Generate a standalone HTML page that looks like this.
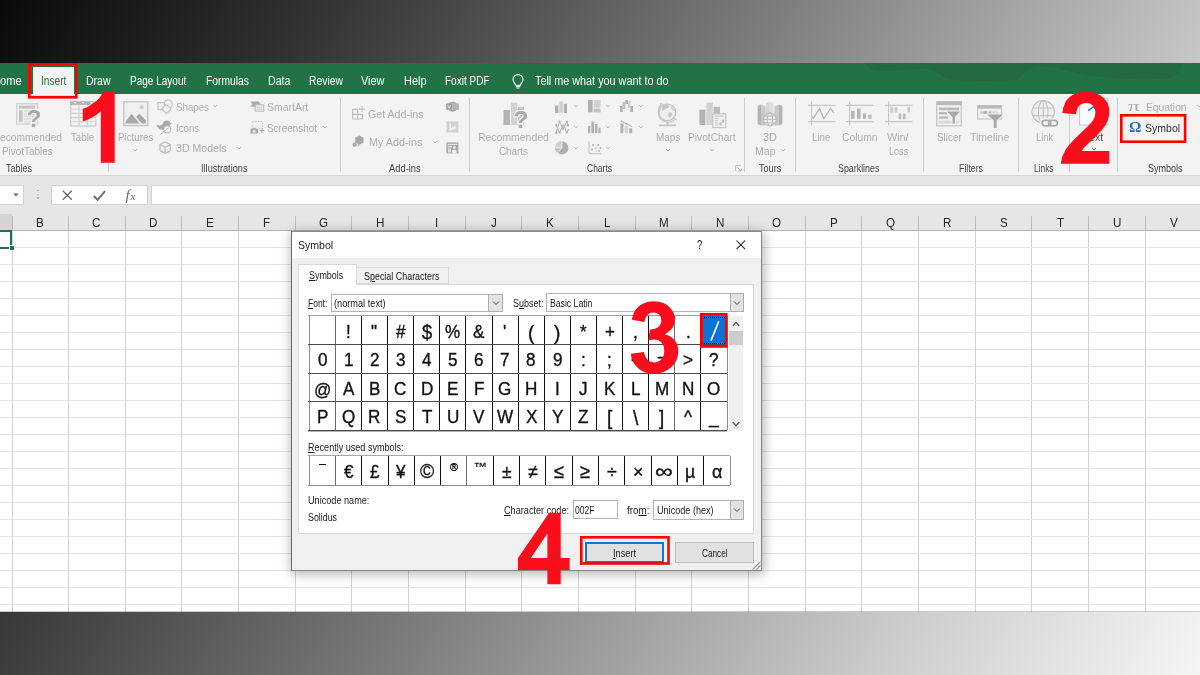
<!DOCTYPE html>
<html><head><meta charset="utf-8"><title>Symbol dialog</title>
<style>
html,body{margin:0;padding:0}
body{width:1200px;height:675px;overflow:hidden;position:relative;font-family:"Liberation Sans",sans-serif;background:#7f7f7f}
div,span.t,svg.i{position:absolute}
span.t{white-space:nowrap;line-height:1;transform-origin:0 0}
span.t u{text-decoration:underline;text-decoration-thickness:1px;text-underline-offset:1px}
svg.i{overflow:visible}
.num{font-weight:bold;color:#fb0d1b;font-size:100px;line-height:1;position:absolute;transform-origin:0 0}
</style></head><body><div id="bg" style="left:0;top:0;width:1200px;height:675px;background:linear-gradient(120deg,#0a0a0a 0%,#1d1d1d 10%,#323232 20%,#4b4b4b 30%,#656565 40%,#7f7f7f 50%,#9a9a9a 60%,#b4b4b4 70%,#cdcdcd 80%,#e2e2e2 90%,#f5f5f5 100%)"></div><div id="w" style="left:0;top:0;width:1200px;height:675px;overflow:hidden;will-change:transform">
<div style="left:0.00px;top:63.00px;width:1200.00px;height:549.00px;background:#ffffff;"></div>
<div style="left:0.00px;top:63.00px;width:1200.00px;height:31.00px;background:#217346;"></div>
<svg class="i" style="left:840.00px;top:63.00px;" width="360" height="31" viewBox="0 0 360 31"><path d="M25 0 C28 5 32 8 45 8 C60 8 75 5 88 6 C95 7 100 12 105 15 C120 19 150 18 178 17 C181 12 188 5 198 3.6 C215 3 225 8 240 11 C270 16 310 18 330 15 C338 12 342 5 342 0 Z" fill="#24693f" opacity=".85"/></svg>
<div style="left:0.00px;top:94.00px;width:1200.00px;height:81.00px;background:#f3f3f3;"></div>
<div style="left:0.00px;top:175.00px;width:1200.00px;height:1.00px;background:#d4d4d4;"></div>
<div style="left:0.00px;top:176.00px;width:1200.00px;height:38.00px;background:#e6e6e6;"></div>
<div style="left:33.30px;top:66.70px;width:41.00px;height:27.50px;background:#f3f3f3;"></div>
<span class="t" style="left:0.00px;top:75px;font-size:12px;color:#ffffff;transform:scaleX(0.9295);">ome</span>
<span class="t" style="left:86.30px;top:75px;font-size:12px;color:#ffffff;transform:scaleX(0.8749);">Draw</span>
<span class="t" style="left:130.00px;top:75px;font-size:12px;color:#ffffff;transform:scaleX(0.8354);">Page Layout</span>
<span class="t" style="left:205.50px;top:75px;font-size:12px;color:#ffffff;transform:scaleX(0.8598);">Formulas</span>
<span class="t" style="left:267.50px;top:75px;font-size:12px;color:#ffffff;transform:scaleX(0.8876);">Data</span>
<span class="t" style="left:309.00px;top:75px;font-size:12px;color:#ffffff;transform:scaleX(0.8641);">Review</span>
<span class="t" style="left:361.00px;top:75px;font-size:12px;color:#ffffff;transform:scaleX(0.9111);">View</span>
<span class="t" style="left:403.50px;top:75px;font-size:12px;color:#ffffff;transform:scaleX(0.9116);">Help</span>
<span class="t" style="left:445.00px;top:75px;font-size:12px;color:#ffffff;transform:scaleX(0.8343);">Foxit PDF</span>
<span class="t" style="left:535.00px;top:75px;font-size:12px;color:#ffffff;transform:scaleX(0.9015);">Tell me what you want to do</span>
<span class="t" style="left:41.30px;top:75px;font-size:12px;color:#217346;transform:scaleX(0.8463);">Insert</span>
<svg class="i" style="left:511.00px;top:73.00px;" width="14" height="16" viewBox="0 0 14 16"><path d="M7 1.6 C3.9 1.6 2 3.9 2 6.4 C2 8.3 3.2 9.4 4 10.6 C4.4 11.2 4.5 11.7 4.5 12.3 L9.5 12.3 C9.5 11.7 9.6 11.2 10 10.6 C10.8 9.4 12 8.3 12 6.4 C12 3.9 10.1 1.6 7 1.6 Z" fill="none" stroke="#fff" stroke-width="1.1"/>
<path d="M4.8 13.6 H9.2 M5.4 15 H8.6" stroke="#fff" stroke-width="1"/></svg>
<div style="left:107.90px;top:98.00px;width:1.00px;height:73.50px;background:#cdcdcd;"></div>
<div style="left:339.90px;top:98.00px;width:1.00px;height:73.50px;background:#cdcdcd;"></div>
<div style="left:468.80px;top:98.00px;width:1.00px;height:73.50px;background:#cdcdcd;"></div>
<div style="left:743.90px;top:98.00px;width:1.00px;height:73.50px;background:#cdcdcd;"></div>
<div style="left:795.10px;top:98.00px;width:1.00px;height:73.50px;background:#cdcdcd;"></div>
<div style="left:922.80px;top:98.00px;width:1.00px;height:73.50px;background:#cdcdcd;"></div>
<div style="left:1017.90px;top:98.00px;width:1.00px;height:73.50px;background:#cdcdcd;"></div>
<div style="left:1068.80px;top:98.00px;width:1.00px;height:73.50px;background:#cdcdcd;"></div>
<div style="left:1116.80px;top:98.00px;width:1.00px;height:73.50px;background:#cdcdcd;"></div>
<span class="t" style="left:6.00px;top:163px;font-size:10.6px;color:#444444;transform:scaleX(0.8485);">Tables</span>
<span class="t" style="left:200.70px;top:163px;font-size:10.6px;color:#444444;transform:scaleX(0.8692);">Illustrations</span>
<span class="t" style="left:388.70px;top:163px;font-size:10.6px;color:#444444;transform:scaleX(0.8820);">Add-ins</span>
<span class="t" style="left:587.00px;top:163px;font-size:10.6px;color:#444444;transform:scaleX(0.8007);">Charts</span>
<span class="t" style="left:759.00px;top:163px;font-size:10.6px;color:#444444;transform:scaleX(0.8564);">Tours</span>
<span class="t" style="left:838.00px;top:163px;font-size:10.6px;color:#444444;transform:scaleX(0.8365);">Sparklines</span>
<span class="t" style="left:958.50px;top:163px;font-size:10.6px;color:#444444;transform:scaleX(0.8317);">Filters</span>
<span class="t" style="left:1033.70px;top:163px;font-size:10.6px;color:#444444;transform:scaleX(0.7880);">Links</span>
<span class="t" style="left:1147.60px;top:163px;font-size:10.6px;color:#444444;transform:scaleX(0.8512);">Symbols</span>
<span class="t" style="left:0.00px;top:131px;font-size:11.6px;color:#adadad;transform:scaleX(0.8821);">ecommended</span>
<span class="t" style="left:2.20px;top:145px;font-size:11.6px;color:#adadad;transform:scaleX(0.8564);">PivotTables</span>
<span class="t" style="left:71.30px;top:131px;font-size:11.6px;color:#adadad;transform:scaleX(0.8366);">Table</span>
<span class="t" style="left:117.70px;top:131px;font-size:11.6px;color:#adadad;transform:scaleX(0.8424);">Pictures</span>
<span class="t" style="left:175.60px;top:101px;font-size:11.6px;color:#adadad;transform:scaleX(0.8388);">Shapes</span>
<span class="t" style="left:175.80px;top:122px;font-size:11.6px;color:#adadad;transform:scaleX(0.8368);">Icons</span>
<span class="t" style="left:175.60px;top:142px;font-size:11.6px;color:#adadad;transform:scaleX(0.9126);">3D Models</span>
<span class="t" style="left:267.00px;top:101px;font-size:11.6px;color:#adadad;transform:scaleX(0.9025);">SmartArt</span>
<span class="t" style="left:267.00px;top:122px;font-size:11.6px;color:#adadad;transform:scaleX(0.8521);">Screenshot</span>
<span class="t" style="left:368.40px;top:108px;font-size:11.6px;color:#adadad;transform:scaleX(0.9173);">Get Add-ins</span>
<span class="t" style="left:368.60px;top:136px;font-size:11.6px;color:#adadad;transform:scaleX(0.9307);">My Add-ins</span>
<span class="t" style="left:478.40px;top:131px;font-size:11.6px;color:#adadad;transform:scaleX(0.9013);">Recommended</span>
<span class="t" style="left:499.40px;top:145px;font-size:11.6px;color:#adadad;transform:scaleX(0.8429);">Charts</span>
<span class="t" style="left:655.70px;top:131px;font-size:11.6px;color:#adadad;transform:scaleX(0.8566);">Maps</span>
<span class="t" style="left:688.00px;top:131px;font-size:11.6px;color:#adadad;transform:scaleX(0.8789);">PivotChart</span>
<span class="t" style="left:763.40px;top:131px;font-size:11.6px;color:#adadad;transform:scaleX(0.9306);">3D</span>
<span class="t" style="left:755.40px;top:145px;font-size:11.6px;color:#adadad;transform:scaleX(0.9129);">Map</span>
<span class="t" style="left:812.20px;top:131px;font-size:11.6px;color:#adadad;transform:scaleX(0.8390);">Line</span>
<span class="t" style="left:841.70px;top:131px;font-size:11.6px;color:#adadad;transform:scaleX(0.8906);">Column</span>
<span class="t" style="left:887.20px;top:131px;font-size:11.6px;color:#adadad;transform:scaleX(0.9310);">Win/</span>
<span class="t" style="left:888.80px;top:145px;font-size:11.6px;color:#adadad;transform:scaleX(0.7836);">Loss</span>
<span class="t" style="left:936.80px;top:131px;font-size:11.6px;color:#adadad;transform:scaleX(0.8550);">Slicer</span>
<span class="t" style="left:969.70px;top:131px;font-size:11.6px;color:#adadad;transform:scaleX(0.9054);">Timeline</span>
<span class="t" style="left:1035.80px;top:131px;font-size:11.6px;color:#adadad;transform:scaleX(0.8082);">Link</span>
<span class="t" style="left:1145.60px;top:101px;font-size:11.6px;color:#adadad;transform:scaleX(0.8865);">Equation</span>
<span class="t" style="left:1083.50px;top:131px;font-size:11.6px;color:#444;transform:scaleX(0.8978);">Text</span>
<span class="t" style="left:1144.80px;top:122px;font-size:11.6px;color:#333;transform:scaleX(0.9100);">Symbol</span>
<svg class="i" style="left:131.30px;top:147.00px;" width="8" height="6" viewBox="0 0 8 6"><path d="M2.1 2.05 L4 3.95 L5.9 2.05" fill="none" stroke="#b8b8b8" stroke-width="1.0"/></svg>
<svg class="i" style="left:211.00px;top:102.80px;" width="8" height="6" viewBox="0 0 8 6"><path d="M2.1 2.05 L4 3.95 L5.9 2.05" fill="none" stroke="#b8b8b8" stroke-width="1.0"/></svg>
<svg class="i" style="left:235.00px;top:144.80px;" width="8" height="6" viewBox="0 0 8 6"><path d="M2.1 2.05 L4 3.95 L5.9 2.05" fill="none" stroke="#b8b8b8" stroke-width="1.0"/></svg>
<svg class="i" style="left:320.50px;top:123.50px;" width="8" height="6" viewBox="0 0 8 6"><path d="M2.1 2.05 L4 3.95 L5.9 2.05" fill="none" stroke="#b8b8b8" stroke-width="1.0"/></svg>
<svg class="i" style="left:430.60px;top:138.60px;" width="8" height="6" viewBox="0 0 8 6"><path d="M2.1 2.05 L4 3.95 L5.9 2.05" fill="none" stroke="#b8b8b8" stroke-width="1.0"/></svg>
<svg class="i" style="left:571.70px;top:103.40px;" width="8" height="6" viewBox="0 0 8 6"><path d="M2.1 2.05 L4 3.95 L5.9 2.05" fill="none" stroke="#b8b8b8" stroke-width="1.0"/></svg>
<svg class="i" style="left:571.70px;top:124.30px;" width="8" height="6" viewBox="0 0 8 6"><path d="M2.1 2.05 L4 3.95 L5.9 2.05" fill="none" stroke="#b8b8b8" stroke-width="1.0"/></svg>
<svg class="i" style="left:571.70px;top:144.80px;" width="8" height="6" viewBox="0 0 8 6"><path d="M2.1 2.05 L4 3.95 L5.9 2.05" fill="none" stroke="#b8b8b8" stroke-width="1.0"/></svg>
<svg class="i" style="left:604.30px;top:103.40px;" width="8" height="6" viewBox="0 0 8 6"><path d="M2.1 2.05 L4 3.95 L5.9 2.05" fill="none" stroke="#b8b8b8" stroke-width="1.0"/></svg>
<svg class="i" style="left:604.30px;top:124.30px;" width="8" height="6" viewBox="0 0 8 6"><path d="M2.1 2.05 L4 3.95 L5.9 2.05" fill="none" stroke="#b8b8b8" stroke-width="1.0"/></svg>
<svg class="i" style="left:604.30px;top:144.80px;" width="8" height="6" viewBox="0 0 8 6"><path d="M2.1 2.05 L4 3.95 L5.9 2.05" fill="none" stroke="#b8b8b8" stroke-width="1.0"/></svg>
<svg class="i" style="left:637.00px;top:103.40px;" width="8" height="6" viewBox="0 0 8 6"><path d="M2.1 2.05 L4 3.95 L5.9 2.05" fill="none" stroke="#b8b8b8" stroke-width="1.0"/></svg>
<svg class="i" style="left:637.00px;top:124.30px;" width="8" height="6" viewBox="0 0 8 6"><path d="M2.1 2.05 L4 3.95 L5.9 2.05" fill="none" stroke="#b8b8b8" stroke-width="1.0"/></svg>
<svg class="i" style="left:663.60px;top:146.70px;" width="8" height="6" viewBox="0 0 8 6"><path d="M2.1 2.05 L4 3.95 L5.9 2.05" fill="none" stroke="#b8b8b8" stroke-width="1.0"/></svg>
<svg class="i" style="left:707.70px;top:146.70px;" width="8" height="6" viewBox="0 0 8 6"><path d="M2.1 2.05 L4 3.95 L5.9 2.05" fill="none" stroke="#b8b8b8" stroke-width="1.0"/></svg>
<svg class="i" style="left:778.70px;top:147.30px;" width="8" height="6" viewBox="0 0 8 6"><path d="M2.1 2.05 L4 3.95 L5.9 2.05" fill="none" stroke="#b8b8b8" stroke-width="1.0"/></svg>
<svg class="i" style="left:1194.50px;top:102.80px;" width="8" height="6" viewBox="0 0 8 6"><path d="M2.1 2.05 L4 3.95 L5.9 2.05" fill="none" stroke="#b8b8b8" stroke-width="1.0"/></svg>
<svg class="i" style="left:1089.70px;top:145.80px;" width="8" height="6" viewBox="0 0 8 6"><path d="M2.1 2.05 L4 3.95 L5.9 2.05" fill="none" stroke="#666" stroke-width="1.0"/></svg>
<svg class="i" style="left:16.00px;top:103.00px;" width="30" height="28" viewBox="0 0 30 28"><rect x=".7" y=".7" width="21" height="20.3" fill="#f0eef0" stroke="#cfcfcf" stroke-width="1.2"/>
<rect x="3" y="2.6" width="16" height="3" fill="#c4c4c4"/><rect x="3" y="7.2" width="3.6" height="11.8" fill="#c4c4c4"/>
<path d="M8 8.2H19M8 10.8H19M8 13.4H19M8 16H19M8 18.6H19" stroke="#dadada" stroke-width="1.3"/>
<text x="10.6" y="24.2" font-family="Liberation Sans" font-weight="bold" font-size="24.5" fill="#f3f3f3" stroke="#f3f3f3" stroke-width="2.4">?</text>
<text x="10.6" y="24.2" font-family="Liberation Sans" font-weight="bold" font-size="24.5" fill="#a9a9a9">?</text></svg>
<svg class="i" style="left:70.00px;top:101.00px;" width="27" height="26" viewBox="0 0 27 26"><rect x=".6" y=".6" width="25.2" height="24.4" fill="#f5f2f5" stroke="#c9c9c9" stroke-width="1.2"/>
<rect x=".6" y=".6" width="25.2" height="3.4" fill="#b5b5b5"/>
<path d="M3.4 1 L6.4 1 L4.9 3 Z M11.6 1 L14.6 1 L13.1 3 Z M19.8 1 L22.8 1 L21.3 3 Z" fill="#fff"/>
<path d="M.6 8.2H25.8M.6 12.4H25.8M.6 16.6H25.8M.6 20.8H25.8M9 4V25M17.4 4V25" stroke="#cfcfcf" stroke-width="1.1" fill="none"/></svg>
<svg class="i" style="left:123.00px;top:101.00px;" width="26" height="26" viewBox="0 0 26 26"><rect x=".8" y=".8" width="24" height="23.8" fill="#f2eff2" stroke="#c8c8c8" stroke-width="1.5"/>
<circle cx="18.8" cy="6.2" r="2.1" fill="#d2d0d2"/>
<path d="M2.6 22.6 L2.6 20.4 L8.6 12.8 L16.6 22.6 Z" fill="#a9a9a9"/>
<path d="M13.2 16 L16.4 12.6 L22.8 19.6 L22.8 22.6 L18.6 22.6 Z" fill="#a9a9a9"/></svg>
<svg class="i" style="left:157.00px;top:98.60px;" width="16" height="16" viewBox="0 0 16 16"><circle cx="11.2" cy="5" r="4.1" fill="#f3f0f3" stroke="#c2c2c2" stroke-width="1.1"/>
<rect x="1" y="3.6" width="6.4" height="7" fill="#f3f0f3" stroke="#c2c2c2" stroke-width="1.1"/>
<path d="M9.4 5.4 L14 10 L9.4 14.6 L4.8 10 Z" fill="#f3f0f3" stroke="#c2c2c2" stroke-width="1.1"/></svg>
<svg class="i" style="left:156.00px;top:119.60px;" width="17" height="15" viewBox="0 0 17 15"><path d="M.4 4.6 C2.6 6 5.2 5.6 6.6 4.2 C7 2 8.6 .6 10.8 .6 C12.6 .6 13.8 1.6 14 2.8 L16 3.6 L14 4.4 C13.6 7.4 11.8 9.4 8.8 10 C4.8 10.6 1.4 8.4 .4 4.6 Z" fill="#a9a9a9"/>
<circle cx="11.2" cy="9.4" r="3.7" fill="#f3f3f3" stroke="#b4b4b4" stroke-width="1"/>
<path d="M4.6 14.2 L12.6 7.6" stroke="#b4b4b4" stroke-width="1"/></svg>
<svg class="i" style="left:158.80px;top:141.00px;" width="13" height="14" viewBox="0 0 13 14"><path d="M6.2 .8 L11.4 3.6 L11.4 9.6 L6.2 12.4 L1 9.6 L1 3.6 Z" fill="#f3f0f3" stroke="#bcbcbc" stroke-width="1.2"/>
<path d="M1 3.6 L6.2 6.4 L11.4 3.6 M6.2 6.4 L6.2 12.4" fill="none" stroke="#bcbcbc" stroke-width="1.1"/></svg>
<svg class="i" style="left:249.60px;top:101.40px;" width="15" height="12" viewBox="0 0 15 12"><path d="M.4 .6 H8.6 L11 3.2 L8.6 5.8 H.4 L2.4 3.2 Z" fill="#a9a9a9"/>
<rect x="5.2" y="3.8" width="8.6" height="6.4" fill="#f3f0f3" stroke="#bdbdbd" stroke-width="1.1"/>
<path d="M7 6.2H12M7 8.2H12" stroke="#c6c6c6" stroke-width=".9"/></svg>
<svg class="i" style="left:249.60px;top:121.00px;" width="15" height="13" viewBox="0 0 15 13"><rect x="2.2" y=".6" width="10.4" height="7.4" fill="#f2eef2" stroke="#c8c8c8" stroke-width="1" stroke-dasharray="1.6 1.2"/>
<rect x=".4" y="7.8" width="7.6" height="4.6" rx=".6" fill="#a9a9a9"/><rect x="2.6" y="6.8" width="3" height="1.4" fill="#a9a9a9"/>
<circle cx="4.2" cy="10.2" r="1.5" fill="#e4e4e4"/>
<path d="M12 7.2V11.8M9.7 9.5H14.3" stroke="#a9a9a9" stroke-width="1.2"/></svg>
<svg class="i" style="left:352.00px;top:106.40px;" width="14" height="14" viewBox="0 0 14 14"><path d="M.6 3.4 H5.6 V13 H.6 Z M.6 8.4 H10.6 V13 H5.6" fill="none" stroke="#bdbdbd" stroke-width="1.1"/>
<path d="M10 .2 V6 M7 3.1 H13" stroke="#bdbdbd" stroke-width="1.1"/></svg>
<svg class="i" style="left:352.00px;top:134.60px;" width="13" height="13" viewBox="0 0 13 13"><path d="M7.4 .6 L11.6 2.8 L11.6 7.6 L7.4 9.8 L3.2 7.6 L3.2 2.8 Z" fill="#a9a9a9"/>
<circle cx="2.6" cy="9.6" r="2.2" fill="#a9a9a9"/><path d="M5.6 8.6 L8 9.9 L5.6 11.4Z" fill="#b4b4b4"/></svg>
<svg class="i" style="left:446.00px;top:100.60px;" width="14" height="12" viewBox="0 0 14 12"><circle cx="6.6" cy="5.8" r="5" fill="#a9a9a9"/><rect x=".4" y="2.4" width="12.4" height="6.4" fill="#b4b4b4"/>
<rect x=".4" y="2.8" width="5.6" height="5.6" fill="#9d9d9d"/><path d="M1.8 4.2 L3.2 7.2 L4.6 4.2" stroke="#eee" stroke-width=".9" fill="none"/></svg>
<svg class="i" style="left:446.00px;top:121.40px;" width="14" height="12" viewBox="0 0 14 12"><rect x=".4" y=".4" width="12" height="11" fill="#d3d0d3"/>
<path d="M3.4 2.2 L5 2.8 L5 7 L8.4 5.6 L6.6 4.8 L9.8 5.6 L9.8 7.4 L5 9.6 L3.4 8.6 Z" fill="#f3f3f3"/></svg>
<svg class="i" style="left:446.00px;top:141.80px;" width="14" height="12" viewBox="0 0 14 12"><rect x=".4" y=".4" width="12" height="11" fill="#a9a9a9"/>
<path d="M1.8 2.4H11M1.8 4.6H6" stroke="#e6e6e6" stroke-width="1.1"/><circle cx="8.4" cy="5.6" r="1.4" fill="#eee"/><path d="M6.2 11.4 V8.6 Q8.4 6.8 10.6 8.6 V11.4Z" fill="#eee"/>
<rect x="2" y="6.4" width="3" height="4" fill="#e0e0e0"/></svg>
<svg class="i" style="left:503.00px;top:101.60px;" width="28" height="28" viewBox="0 0 28 28"><rect x=".5" y="8" width="6.4" height="15" fill="#b3b3b3"/><rect x="8" y=".7" width="6.2" height="22.3" fill="#d5d2d5"/>
<rect x="15" y="5" width="6" height="18" fill="#c2c2c2"/>
<text x="10.4" y="25.6" font-family="Liberation Sans" font-weight="bold" font-size="24.5" fill="#f3f3f3" stroke="#f3f3f3" stroke-width="2.4">?</text>
<text x="10.4" y="25.6" font-family="Liberation Sans" font-weight="bold" font-size="24.5" fill="#a9a9a9">?</text></svg>
<svg class="i" style="left:555.00px;top:100.60px;" width="13" height="13" viewBox="0 0 13 13"><rect x="0" y="4.6" width="3.4" height="7.4" fill="#b0b0b0"/><rect x="4.4" y=".4" width="3.4" height="11.6" fill="#d3d0d3"/><rect x="8.8" y="2.8" width="3.2" height="9.2" fill="#b0b0b0"/></svg>
<svg class="i" style="left:554.60px;top:119.80px;" width="15" height="15" viewBox="0 0 15 15"><path d="M1 13 L4.6 1.4 L8.2 9 L11.8 1.4 L13.4 5.6 M1 5 L4.6 12.6 L8.2 4.6 L11.8 12.6 L13.6 9" fill="none" stroke="#b0b0b0" stroke-width="1"/>
<g fill="#b0b0b0"><circle cx="1.2" cy="13" r="1.1"/><circle cx="4.6" cy="12.6" r="1.1"/><circle cx="8.2" cy="9" r="1.1"/><circle cx="11.8" cy="12.6" r="1.1"/><circle cx="13" cy="5.6" r="1.1"/><circle cx="1" cy="5" r="1"/><circle cx="4.6" cy="1.6" r="1"/><circle cx="11.8" cy="1.6" r="1"/></g></svg>
<svg class="i" style="left:554.80px;top:141.00px;" width="14" height="14" viewBox="0 0 14 14"><circle cx="6.8" cy="6.9" r="6.6" fill="#b0b0b0"/><path d="M6.8 6.9 L6.8 .3 A6.6 6.6 0 0 0 .2 6.9 Z" fill="#d3d0d3"/>
<path d="M6.8 6.9 L.2 6.9 A6.6 6.6 0 0 0 2.6 12 Z" fill="#c0c0c0"/><path d="M6.8 .3 V6.9 H.2 M6.8 6.9 L2.6 12" stroke="#f3f3f3" stroke-width=".8" fill="none"/></svg>
<svg class="i" style="left:588.00px;top:100.20px;" width="13" height="13" viewBox="0 0 13 13"><rect x="0" y="0" width="4.6" height="12.4" fill="#b0b0b0"/><rect x="5.6" y="0" width="7" height="7.6" fill="#d3d0d3"/><rect x="5.6" y="8.6" width="7" height="3.8" fill="#c0c0c0"/></svg>
<svg class="i" style="left:588.00px;top:120.60px;" width="13" height="13" viewBox="0 0 13 13"><rect x="0" y="5" width="2.4" height="7.2" fill="#b0b0b0"/><rect x="3.4" y=".4" width="2.6" height="11.8" fill="#b0b0b0"/><rect x="7" y="3" width="2.4" height="9.2" fill="#b0b0b0"/><rect x="10.4" y="6.6" width="2.2" height="5.6" fill="#b0b0b0"/></svg>
<svg class="i" style="left:587.60px;top:141.00px;" width="14" height="14" viewBox="0 0 14 14"><path d="M1 .4 V12.6 H13" fill="none" stroke="#c0c0c0" stroke-width="1"/>
<g fill="#b0b0b0"><rect x="3.2" y="7.6" width="1.8" height="1.8"/><rect x="4.2" y="3.2" width="1.6" height="1.6"/><rect x="9.4" y="3" width="1.8" height="1.8"/><rect x="11.6" y="6.2" width="1.6" height="1.6"/><rect x="10.4" y="9.4" width="1.6" height="1.6"/></g>
<g fill="#d3d0d3"><rect x="6.8" y="6.2" width="1.8" height="1.8"/><rect x="7.6" y="9.2" width="1.6" height="1.6"/></g></svg>
<svg class="i" style="left:620.00px;top:100.00px;" width="13" height="13" viewBox="0 0 13 13"><rect x="0" y="6" width="2.6" height="6" fill="#b0b0b0"/><rect x="2.6" y="2" width="2.8" height="7" fill="#c0c0c0"/><rect x="5.4" y="0" width="2.6" height="4" fill="#b0b0b0"/><rect x="8" y="1" width="2.4" height="7" fill="#d3d0d3"/><rect x="10.4" y="6" width="2.6" height="6" fill="#b0b0b0"/></svg>
<svg class="i" style="left:620.00px;top:120.00px;" width="13" height="14" viewBox="0 0 13 14"><rect x=".4" y="3.4" width="3" height="9.8" fill="#b0b0b0"/><rect x="4.8" y="6" width="3" height="7.2" fill="#d3d0d3"/><rect x="9.2" y="8.4" width="3" height="4.8" fill="#b0b0b0"/>
<path d="M1 1 L5.6 3.4 L12.4 6.8" stroke="#b0b0b0" stroke-width="1" fill="none"/><circle cx="1.6" cy="1.2" r="1" fill="#b0b0b0"/><circle cx="6.2" cy="3.8" r="1" fill="#b0b0b0"/></svg>
<svg class="i" style="left:734.60px;top:164.80px;" width="7" height="7" viewBox="0 0 7 7"><path d="M.5 6 V.5 H6" fill="none" stroke="#c2c2c2" stroke-width="1"/><path d="M2.4 2.4 L6 6 M6 3.4 V6 H3.4" fill="none" stroke="#b5b5b5" stroke-width="1"/></svg>
<svg class="i" style="left:657.00px;top:100.60px;" width="22" height="27" viewBox="0 0 22 27"><circle cx="10.4" cy="11.4" r="8.3" fill="#f1eef1" stroke="#c3c3c3" stroke-width="1.2"/>
<path d="M5.4 5.6 C7 4 10 3.6 11.6 4.4 C12.6 5.6 11.4 7.4 9.4 7.6 C8.4 9 6.4 8.6 5.6 9.8 C4.6 8.6 4.6 6.8 5.4 5.6Z M11.6 12 C13 11.2 14.8 11.6 15 13 C14.8 15 13.4 16.6 12 16.4 C11.2 15 10.8 13.4 11.6 12Z M13.6 5.2 C15.6 6 17 8 17.2 10 C16 9.4 14.4 8 13.6 5.2Z" fill="#c4c4c4"/>
<path d="M4.2 3.4 C.4 7.4 .2 14.6 4.4 18.6 C8.4 22.4 14.6 22 18.4 18.2" fill="none" stroke="#c3c3c3" stroke-width="1.2"/>
<path d="M3.4 2 L5.6 4.2 M17.4 17.2 L19.6 19.4" stroke="#c3c3c3" stroke-width="1.2"/>
<rect x="9.6" y="20.6" width="1.6" height="3.4" fill="#c3c3c3"/><rect x="1.8" y="23.6" width="17.4" height="1.7" rx=".8" fill="#c3c3c3"/></svg>
<svg class="i" style="left:698.60px;top:101.60px;" width="28" height="27" viewBox="0 0 28 27"><rect x=".4" y="7.6" width="6" height="15.4" fill="#b3b3b3"/><rect x="7.4" y=".6" width="6.4" height="22.4" fill="#d5d2d5"/><rect x="14.6" y="4.8" width="6.4" height="9" fill="#b9b9b9"/>
<rect x="13.8" y="11.8" width="13" height="13.8" fill="#f2eff2" stroke="#c4c4c4" stroke-width="1.1"/>
<path d="M16 14.2H25M16 16.4H19.4M16 18.6H19.4M16 20.8H19.4M16 23H19.4" stroke="#cfcfcf" stroke-width="1.2"/>
<path d="M21 22.6 L24.6 18.4 M21 20.4 V22.8 H23.2 M22.6 18.2 H24.8 V20.4" fill="none" stroke="#b6b6b6" stroke-width="1"/></svg>
<svg class="i" style="left:757.40px;top:100.60px;" width="27" height="27" viewBox="0 0 27 27"><path d="M.6 5 L4 3.4 L4 24.6 L.6 23 Z" fill="#b3b3b3"/><path d="M4 3.4 L8.6 5.4 L8.6 24.6 L4 24.6Z" fill="#c9c9c9"/>
<path d="M9 2 L12.6 .4 L12.6 24 L9 24Z" fill="#d8d5d8"/><path d="M12.6 .4 L16.6 2 L16.6 24 L12.6 24Z" fill="#e2dfe2"/>
<path d="M17.4 5.4 L21.6 3.4 L21.6 24.6 L17.4 24.6Z" fill="#c9c9c9"/><path d="M21.6 3.4 L25.4 5 L25.4 23 L21.6 24.6Z" fill="#b3b3b3"/>
<circle cx="12.9" cy="18.4" r="6.4" fill="#f3f0f3" stroke="#b9b9b9" stroke-width="1.1"/>
<ellipse cx="12.9" cy="18.4" rx="2.8" ry="6.4" fill="none" stroke="#b9b9b9" stroke-width="1"/>
<path d="M6.6 18.4H19.2M7.6 15H18.2M7.6 21.8H18.2" stroke="#b9b9b9" stroke-width="1" fill="none"/></svg>
<svg class="i" style="left:808.00px;top:101.00px;" width="28" height="26" viewBox="0 0 28 26"><path d="M0 4.4H27.4M0 20.6H27.4" stroke="#c6c6c6" stroke-width="1.1"/><path d="M3.6 .4V24.6" stroke="#c6c6c6" stroke-width="1.1"/><path d="M3.8 15.8 L5.6 17.2 L11.4 7.4 L15.8 17.8 L22.6 7.4 L25.8 11.6" fill="none" stroke="#b3b3b3" stroke-width="1.2"/></svg>
<svg class="i" style="left:846.30px;top:101.00px;" width="28" height="26" viewBox="0 0 28 26"><path d="M0 4.4H27.4M0 20.6H27.4" stroke="#c6c6c6" stroke-width="1.1"/><path d="M3.6 .4V24.6" stroke="#c6c6c6" stroke-width="1.1"/><rect x="5" y="10" width="3.6" height="7.8" fill="#b6b6b6"/><rect x="11" y="7.4" width="3.6" height="10.4" fill="#b6b6b6"/><rect x="16.8" y="12.4" width="3.2" height="5.4" fill="#b6b6b6"/><rect x="22" y="13.8" width="3.6" height="4" fill="#bdbdbd"/></svg>
<svg class="i" style="left:884.60px;top:101.00px;" width="28" height="26" viewBox="0 0 28 26"><path d="M0 4.4H27.4M0 20.6H27.4" stroke="#c6c6c6" stroke-width="1.1"/><path d="M3.6 .4V24.6" stroke="#c6c6c6" stroke-width="1.1"/><rect x="5.4" y="6" width="2.8" height="5.6" fill="#cdcacd"/><rect x="9.6" y="6" width="2.8" height="5.6" fill="#cdcacd"/><rect x="13.6" y="12.6" width="2.8" height="5.6" fill="#bcbcbc"/><rect x="17.8" y="12.6" width="2.8" height="5.6" fill="#bcbcbc"/><rect x="22.4" y="6" width="2.6" height="5.6" fill="#cdcacd"/></svg>
<svg class="i" style="left:936.00px;top:100.80px;" width="27" height="26" viewBox="0 0 27 26"><rect x=".7" y=".7" width="24.6" height="24.2" fill="#f2eff2" stroke="#c6c6c6" stroke-width="1.3"/><rect x=".7" y=".7" width="24.6" height="3.4" fill="#bababa"/>
<rect x="3" y="6.6" width="20" height="2.6" fill="#b9b9b9"/><rect x="3" y="11" width="8" height="2.4" fill="#b9b9b9"/><rect x="3" y="15.4" width="9" height="2.4" fill="#b9b9b9"/><rect x="3" y="19.8" width="20" height="2.6" fill="#d9d6d9"/>
<path d="M10.6 10.4 H24.4 L19 16.4 V22.6 H16.4 V16.4 Z" fill="#f2eff2" stroke="#f2eff2" stroke-width="1.4"/>
<path d="M11 10.6 H24 L18.9 16.2 V22.6 H16.5 V16.2 Z" fill="#a9a9a9"/></svg>
<svg class="i" style="left:977.00px;top:104.60px;" width="28" height="24" viewBox="0 0 28 24"><rect x=".6" y=".6" width="24" height="13.4" fill="#f2eff2" stroke="#c6c6c6" stroke-width="1.2"/><rect x=".6" y=".6" width="24" height="3" fill="#bababa"/>
<rect x="3.2" y="6.4" width="2.4" height="2.4" fill="#c9c9c9"/><rect x="6.4" y="6.2" width="4" height="2.8" fill="#adadad"/><rect x="11.4" y="6.4" width="3" height="2.4" fill="#b9b9b9"/><rect x="15.4" y="6.4" width="2.4" height="2.4" fill="#d0d0d0"/><rect x="18.6" y="6.4" width="2.4" height="2.4" fill="#d6d6d6"/>
<path d="M9.6 9.2 H26.6 L19.8 15.6 V23 H16.6 V15.6 Z" fill="#f2eff2" stroke="#f2eff2" stroke-width="1.4"/>
<path d="M10.2 9.6 H26 L19.6 15.4 V23 H16.8 V15.4 Z" fill="#a9a9a9"/></svg>
<svg class="i" style="left:1031.00px;top:100.20px;" width="29" height="29" viewBox="0 0 29 29"><circle cx="12.2" cy="11.8" r="11.2" fill="#f1eef1" stroke="#c3c3c3" stroke-width="1.2"/>
<ellipse cx="12.2" cy="11.8" rx="4.8" ry="11.2" fill="none" stroke="#c3c3c3" stroke-width="1.1"/>
<path d="M12.2 .6V23 M1.6 8H22.8 M1.6 15.6H22.8" stroke="#c3c3c3" stroke-width="1.1" fill="none"/>
<rect x="9.4" y="18.4" width="18.6" height="9.6" fill="#f3f3f3"/>
<rect x="11.2" y="20.4" width="8.6" height="5.4" rx="2.7" fill="none" stroke="#ababab" stroke-width="1.8"/>
<rect x="17.6" y="20.4" width="8.6" height="5.4" rx="2.7" fill="none" stroke="#ababab" stroke-width="1.8"/></svg>
<svg class="i" style="left:1079.00px;top:97.60px;" width="30" height="28" viewBox="0 0 30 28"><rect x=".6" y=".6" width="28" height="26.4" fill="#ffffff" stroke="#c8c8c8" stroke-width="1.1"/>
<path d="M9 12.6 L14.6 8.6 L17 12" fill="none" stroke="#2e75b6" stroke-width="1.6"/></svg>
<span class="t" style="left:1128.40px;top:98px;font-size:15.5px;color:#aaaaaa;transform:scaleX(1.5077);font-family:'Liberation Serif',serif;">π</span>
<span class="t" style="left:1128.60px;top:120px;font-size:15px;color:#2b6cb8;transform:scaleX(1.0323);font-weight:bold;font-family:'Liberation Serif',serif;">Ω</span>
<div style="left:-1.00px;top:184.60px;width:25.40px;height:20.60px;background:#ffffff;border:1px solid #d2d2d2;box-sizing:border-box;"></div>
<svg class="i" style="left:13.00px;top:192.60px;" width="6" height="4" viewBox="0 0 6 4"><path d="M.2 .4 H5.8 L3 3.6 Z" fill="#6a6a6a"/></svg>
<div style="left:37.30px;top:189.70px;width:1.50px;height:1.50px;background:#b8b8b8;"></div>
<div style="left:37.30px;top:193.50px;width:1.50px;height:1.50px;background:#b8b8b8;"></div>
<div style="left:37.30px;top:197.30px;width:1.50px;height:1.50px;background:#b8b8b8;"></div>
<div style="left:51.30px;top:184.60px;width:96.80px;height:20.60px;background:#ffffff;border:1px solid #d2d2d2;box-sizing:border-box;"></div>
<div style="left:150.60px;top:184.60px;width:1052.00px;height:20.60px;background:#ffffff;border:1px solid #d2d2d2;box-sizing:border-box;"></div>
<svg class="i" style="left:62.00px;top:190.00px;" width="11" height="11" viewBox="0 0 11 11"><path d="M.8 .8 L9.8 9.8 M9.8 .8 L.8 9.8" stroke="#6a6a6a" stroke-width="1.3" fill="none"/></svg>
<svg class="i" style="left:93.40px;top:189.60px;" width="13" height="11" viewBox="0 0 13 11"><path d="M.8 6 L4.6 9.8 L12 1.2" stroke="#6a6a6a" stroke-width="1.9" fill="none"/></svg>
<span class="t" style="left:125.60px;top:188px;font-size:15px;color:#6a6a6a;font-family:'Liberation Serif',serif;font-style:italic;">f</span>
<span class="t" style="left:130.40px;top:191px;font-size:11px;color:#6a6a6a;font-family:'Liberation Serif',serif;font-style:italic;">x</span>
<div style="left:0.00px;top:214.00px;width:1200.00px;height:16.40px;background:#e6e6e6;"></div>
<div style="left:0.00px;top:214.00px;width:11.70px;height:16.40px;background:#d4d4d4;"></div>
<div style="left:0.00px;top:230.20px;width:1200.00px;height:1.00px;background:#b4b4b4;"></div>
<span class="t" style="left:36.02px;top:217px;font-size:12px;color:#262626;transform:scaleX(0.9700);">B</span>
<span class="t" style="left:92.40px;top:217px;font-size:12px;color:#262626;transform:scaleX(0.9700);">C</span>
<span class="t" style="left:149.10px;top:217px;font-size:12px;color:#262626;transform:scaleX(0.9700);">D</span>
<span class="t" style="left:206.12px;top:217px;font-size:12px;color:#262626;transform:scaleX(0.9700);">E</span>
<span class="t" style="left:263.14px;top:217px;font-size:12px;color:#262626;transform:scaleX(0.9700);">F</span>
<span class="t" style="left:318.87px;top:217px;font-size:12px;color:#262626;transform:scaleX(0.9700);">G</span>
<span class="t" style="left:375.90px;top:217px;font-size:12px;color:#262626;transform:scaleX(0.9700);">H</span>
<span class="t" style="left:435.18px;top:217px;font-size:12px;color:#262626;transform:scaleX(0.9700);">I</span>
<span class="t" style="left:490.59px;top:217px;font-size:12px;color:#262626;transform:scaleX(0.9700);">J</span>
<span class="t" style="left:546.32px;top:217px;font-size:12px;color:#262626;transform:scaleX(0.9700);">K</span>
<span class="t" style="left:603.66px;top:217px;font-size:12px;color:#262626;transform:scaleX(0.9700);">L</span>
<span class="t" style="left:658.75px;top:217px;font-size:12px;color:#262626;transform:scaleX(0.9700);">M</span>
<span class="t" style="left:716.10px;top:217px;font-size:12px;color:#262626;transform:scaleX(0.9700);">N</span>
<span class="t" style="left:772.47px;top:217px;font-size:12px;color:#262626;transform:scaleX(0.9700);">O</span>
<span class="t" style="left:829.82px;top:217px;font-size:12px;color:#262626;transform:scaleX(0.9700);">P</span>
<span class="t" style="left:885.87px;top:217px;font-size:12px;color:#262626;transform:scaleX(0.9700);">Q</span>
<span class="t" style="left:942.90px;top:217px;font-size:12px;color:#262626;transform:scaleX(0.9700);">R</span>
<span class="t" style="left:999.92px;top:217px;font-size:12px;color:#262626;transform:scaleX(0.9700);">S</span>
<span class="t" style="left:1056.94px;top:217px;font-size:12px;color:#262626;transform:scaleX(0.9700);">T</span>
<span class="t" style="left:1113.00px;top:217px;font-size:12px;color:#262626;transform:scaleX(0.9700);">U</span>
<span class="t" style="left:1170.02px;top:217px;font-size:12px;color:#262626;transform:scaleX(0.9700);">V</span>
<div style="left:12.00px;top:216.00px;width:1.00px;height:14.40px;background:#bdbdbd;"></div>
<div style="left:12.00px;top:231.00px;width:1.00px;height:381.00px;background:#d2d2d2;"></div>
<div style="left:68.00px;top:216.00px;width:1.00px;height:14.40px;background:#bdbdbd;"></div>
<div style="left:68.00px;top:231.00px;width:1.00px;height:381.00px;background:#d2d2d2;"></div>
<div style="left:125.00px;top:216.00px;width:1.00px;height:14.40px;background:#bdbdbd;"></div>
<div style="left:125.00px;top:231.00px;width:1.00px;height:381.00px;background:#d2d2d2;"></div>
<div style="left:181.00px;top:216.00px;width:1.00px;height:14.40px;background:#bdbdbd;"></div>
<div style="left:181.00px;top:231.00px;width:1.00px;height:381.00px;background:#d2d2d2;"></div>
<div style="left:238.00px;top:216.00px;width:1.00px;height:14.40px;background:#bdbdbd;"></div>
<div style="left:238.00px;top:231.00px;width:1.00px;height:381.00px;background:#d2d2d2;"></div>
<div style="left:295.00px;top:216.00px;width:1.00px;height:14.40px;background:#bdbdbd;"></div>
<div style="left:295.00px;top:231.00px;width:1.00px;height:381.00px;background:#d2d2d2;"></div>
<div style="left:351.00px;top:216.00px;width:1.00px;height:14.40px;background:#bdbdbd;"></div>
<div style="left:351.00px;top:231.00px;width:1.00px;height:381.00px;background:#d2d2d2;"></div>
<div style="left:408.00px;top:216.00px;width:1.00px;height:14.40px;background:#bdbdbd;"></div>
<div style="left:408.00px;top:231.00px;width:1.00px;height:381.00px;background:#d2d2d2;"></div>
<div style="left:465.00px;top:216.00px;width:1.00px;height:14.40px;background:#bdbdbd;"></div>
<div style="left:465.00px;top:231.00px;width:1.00px;height:381.00px;background:#d2d2d2;"></div>
<div style="left:521.00px;top:216.00px;width:1.00px;height:14.40px;background:#bdbdbd;"></div>
<div style="left:521.00px;top:231.00px;width:1.00px;height:381.00px;background:#d2d2d2;"></div>
<div style="left:578.00px;top:216.00px;width:1.00px;height:14.40px;background:#bdbdbd;"></div>
<div style="left:578.00px;top:231.00px;width:1.00px;height:381.00px;background:#d2d2d2;"></div>
<div style="left:635.00px;top:216.00px;width:1.00px;height:14.40px;background:#bdbdbd;"></div>
<div style="left:635.00px;top:231.00px;width:1.00px;height:381.00px;background:#d2d2d2;"></div>
<div style="left:691.00px;top:216.00px;width:1.00px;height:14.40px;background:#bdbdbd;"></div>
<div style="left:691.00px;top:231.00px;width:1.00px;height:381.00px;background:#d2d2d2;"></div>
<div style="left:748.00px;top:216.00px;width:1.00px;height:14.40px;background:#bdbdbd;"></div>
<div style="left:748.00px;top:231.00px;width:1.00px;height:381.00px;background:#d2d2d2;"></div>
<div style="left:805.00px;top:216.00px;width:1.00px;height:14.40px;background:#bdbdbd;"></div>
<div style="left:805.00px;top:231.00px;width:1.00px;height:381.00px;background:#d2d2d2;"></div>
<div style="left:861.00px;top:216.00px;width:1.00px;height:14.40px;background:#bdbdbd;"></div>
<div style="left:861.00px;top:231.00px;width:1.00px;height:381.00px;background:#d2d2d2;"></div>
<div style="left:918.00px;top:216.00px;width:1.00px;height:14.40px;background:#bdbdbd;"></div>
<div style="left:918.00px;top:231.00px;width:1.00px;height:381.00px;background:#d2d2d2;"></div>
<div style="left:975.00px;top:216.00px;width:1.00px;height:14.40px;background:#bdbdbd;"></div>
<div style="left:975.00px;top:231.00px;width:1.00px;height:381.00px;background:#d2d2d2;"></div>
<div style="left:1031.00px;top:216.00px;width:1.00px;height:14.40px;background:#bdbdbd;"></div>
<div style="left:1031.00px;top:231.00px;width:1.00px;height:381.00px;background:#d2d2d2;"></div>
<div style="left:1088.00px;top:216.00px;width:1.00px;height:14.40px;background:#bdbdbd;"></div>
<div style="left:1088.00px;top:231.00px;width:1.00px;height:381.00px;background:#d2d2d2;"></div>
<div style="left:1145.00px;top:216.00px;width:1.00px;height:14.40px;background:#bdbdbd;"></div>
<div style="left:1145.00px;top:231.00px;width:1.00px;height:381.00px;background:#d2d2d2;"></div>
<div style="left:1201.00px;top:216.00px;width:1.00px;height:14.40px;background:#bdbdbd;"></div>
<div style="left:1201.00px;top:231.00px;width:1.00px;height:381.00px;background:#d2d2d2;"></div>
<div style="left:0.00px;top:246.70px;width:1200.00px;height:1.80px;background:#e2e2e2;"></div>
<div style="left:0.00px;top:263.70px;width:1200.00px;height:1.80px;background:#e2e2e2;"></div>
<div style="left:0.00px;top:280.70px;width:1200.00px;height:1.80px;background:#e2e2e2;"></div>
<div style="left:0.00px;top:297.70px;width:1200.00px;height:1.80px;background:#e2e2e2;"></div>
<div style="left:0.00px;top:314.70px;width:1200.00px;height:1.80px;background:#e2e2e2;"></div>
<div style="left:0.00px;top:331.70px;width:1200.00px;height:1.80px;background:#e2e2e2;"></div>
<div style="left:0.00px;top:348.70px;width:1200.00px;height:1.80px;background:#e2e2e2;"></div>
<div style="left:0.00px;top:365.70px;width:1200.00px;height:1.80px;background:#e2e2e2;"></div>
<div style="left:0.00px;top:382.70px;width:1200.00px;height:1.80px;background:#e2e2e2;"></div>
<div style="left:0.00px;top:399.70px;width:1200.00px;height:1.80px;background:#e2e2e2;"></div>
<div style="left:0.00px;top:416.70px;width:1200.00px;height:1.80px;background:#e2e2e2;"></div>
<div style="left:0.00px;top:433.70px;width:1200.00px;height:1.80px;background:#e2e2e2;"></div>
<div style="left:0.00px;top:450.70px;width:1200.00px;height:1.80px;background:#e2e2e2;"></div>
<div style="left:0.00px;top:467.70px;width:1200.00px;height:1.80px;background:#e2e2e2;"></div>
<div style="left:0.00px;top:484.70px;width:1200.00px;height:1.80px;background:#e2e2e2;"></div>
<div style="left:0.00px;top:501.70px;width:1200.00px;height:1.80px;background:#e2e2e2;"></div>
<div style="left:0.00px;top:518.70px;width:1200.00px;height:1.80px;background:#e2e2e2;"></div>
<div style="left:0.00px;top:535.70px;width:1200.00px;height:1.80px;background:#e2e2e2;"></div>
<div style="left:0.00px;top:552.70px;width:1200.00px;height:1.80px;background:#e2e2e2;"></div>
<div style="left:0.00px;top:569.70px;width:1200.00px;height:1.80px;background:#e2e2e2;"></div>
<div style="left:0.00px;top:586.70px;width:1200.00px;height:1.80px;background:#e2e2e2;"></div>
<div style="left:0.00px;top:603.70px;width:1200.00px;height:1.80px;background:#e2e2e2;"></div>
<div style="left:0.00px;top:611.40px;width:1200.00px;height:1.00px;background:rgba(0,0,0,.2);"></div>
<div style="left:-2.00px;top:230.00px;width:14.40px;height:18.60px;border:2px solid #217346;box-sizing:border-box;"></div>
<div style="left:9.60px;top:245.80px;width:4.00px;height:4.00px;background:#217346;border:1px solid #fff;box-sizing:content-box;margin:-1px;"></div>
<div style="left:291.30px;top:231.00px;width:470.30px;height:339.60px;background:#f0f0f0;border:1px solid #858585;border-top-color:#8a8a8a;border-left-color:#6a6a6a;box-sizing:border-box;box-shadow:1px 2px 11px 1px rgba(0,0,0,.3);"></div>
<div style="left:292.30px;top:232.00px;width:468.30px;height:26.00px;background:#ffffff;"></div>
<span class="t" style="left:297.80px;top:241px;font-size:10.3px;color:#1a1a1a;transform:scaleX(1.0249);">Symbol</span>
<span class="t" style="left:697.20px;top:239px;font-size:12.4px;color:#111;transform:scaleX(0.7540);">?</span>
<svg class="i" style="left:735.60px;top:240.20px;" width="10" height="10" viewBox="0 0 10 10"><path d="M.5 .5 L9.1 9.1 M9.1 .5 L.5 9.1" stroke="#1a1a1a" stroke-width="1.05" fill="none"/></svg>
<div style="left:298.40px;top:283.60px;width:455.40px;height:250.20px;background:#ffffff;border:1px solid #d9d9d9;box-sizing:border-box;"></div>
<div style="left:356.20px;top:266.60px;width:92.40px;height:17.60px;background:#f0f0f0;border:1px solid #d9d9d9;box-sizing:border-box;"></div>
<div style="left:298.40px;top:264.40px;width:58.40px;height:20.60px;background:#ffffff;border:1px solid #d9d9d9;border-bottom:none;box-sizing:border-box;"></div>
<span class="t" style="left:309.20px;top:271px;font-size:10px;color:#1a1a1a;transform:scaleX(0.8919);"><u>S</u>ymbols</span>
<span class="t" style="left:363.80px;top:272px;font-size:10px;color:#1a1a1a;transform:scaleX(0.8925);">S<u>p</u>ecial Characters</span>
<span class="t" style="left:308.00px;top:299px;font-size:10px;color:#1a1a1a;transform:scaleX(0.8469);"><u>F</u>ont:</span>
<div style="left:331.20px;top:293.60px;width:171.60px;height:18.20px;background:#ffffff;border:1px solid #b3b3b3;box-sizing:border-box;"></div>
<div style="left:488.20px;top:293.60px;width:14.60px;height:18.20px;background:#e3e3e3;border:1px solid #adadad;box-sizing:border-box;"></div>
<svg class="i" style="left:491.50px;top:300.10px;" width="8" height="6" viewBox="0 0 8 6"><path d="M1.0 1.5 L4 4.5 L7.0 1.5" fill="none" stroke="#444" stroke-width="1.0"/></svg>
<span class="t" style="left:333.80px;top:299px;font-size:10px;color:#1a1a1a;transform:scaleX(0.9194);">(normal text)</span>
<span class="t" style="left:512.60px;top:299px;font-size:10px;color:#1a1a1a;transform:scaleX(0.8964);">S<u>u</u>bset:</span>
<div style="left:545.80px;top:293.40px;width:198.60px;height:18.60px;background:#ffffff;border:1px solid #b3b3b3;box-sizing:border-box;"></div>
<div style="left:729.80px;top:293.40px;width:14.60px;height:18.60px;background:#e3e3e3;border:1px solid #adadad;box-sizing:border-box;"></div>
<svg class="i" style="left:733.10px;top:300.10px;" width="8" height="6" viewBox="0 0 8 6"><path d="M1.0 1.5 L4 4.5 L7.0 1.5" fill="none" stroke="#444" stroke-width="1.0"/></svg>
<span class="t" style="left:549.60px;top:299px;font-size:10px;color:#1a1a1a;transform:scaleX(0.8668);">Basic Latin</span>
<div style="left:308.40px;top:315.80px;width:418.72px;height:114.40px;background:#ffffff;"></div>
<div style="left:701.20px;top:316.40px;width:26.12px;height:28.40px;background:#0a74d6;"></div>
<span class="t" style="left:346.00px;top:323px;font-size:18.2px;color:#111111;transform:scaleX(0.9400);-webkit-text-stroke:.35px #111;">!</span>
<span class="t" style="left:371.46px;top:323px;font-size:18.2px;color:#111111;transform:scaleX(0.9400);-webkit-text-stroke:.35px #111;">"</span>
<span class="t" style="left:395.86px;top:323px;font-size:18.2px;color:#111111;transform:scaleX(0.9400);-webkit-text-stroke:.35px #111;">#</span>
<span class="t" style="left:421.67px;top:323px;font-size:19.4px;color:#111111;transform:scaleX(0.9400);-webkit-text-stroke:.35px #111;">$</span>
<span class="t" style="left:445.25px;top:323px;font-size:18.2px;color:#111111;transform:scaleX(0.9400);-webkit-text-stroke:.35px #111;">%</span>
<span class="t" style="left:473.27px;top:323px;font-size:18.2px;color:#111111;transform:scaleX(0.9400);-webkit-text-stroke:.35px #111;">&amp;</span>
<span class="t" style="left:503.47px;top:323px;font-size:18.2px;color:#111111;transform:scaleX(0.9400);-webkit-text-stroke:.35px #111;">'</span>
<span class="t" style="left:528.03px;top:323px;font-size:20.4px;color:#111111;transform:scaleX(0.9400);-webkit-text-stroke:.35px #111;">(</span>
<span class="t" style="left:554.15px;top:323px;font-size:20.4px;color:#111111;transform:scaleX(0.9400);-webkit-text-stroke:.35px #111;">)</span>
<span class="t" style="left:580.13px;top:323px;font-size:18.2px;color:#111111;transform:scaleX(0.9400);-webkit-text-stroke:.35px #111;">*</span>
<span class="t" style="left:604.58px;top:323px;font-size:18.2px;color:#111111;transform:scaleX(0.9400);-webkit-text-stroke:.35px #111;">+</span>
<span class="t" style="left:633.32px;top:323px;font-size:18.2px;color:#111111;transform:scaleX(0.9400);-webkit-text-stroke:.35px #111;">,</span>
<span class="t" style="left:658.97px;top:323px;font-size:18.2px;color:#111111;transform:scaleX(0.9400);-webkit-text-stroke:.35px #111;">-</span>
<span class="t" style="left:685.56px;top:323px;font-size:18.2px;color:#111111;transform:scaleX(0.9400);-webkit-text-stroke:.35px #111;">.</span>
<svg class="i" style="left:703.00px;top:316.00px;" width="24" height="29" viewBox="0 0 24 29"><path d="M8 24.6 L15.8 5.2" stroke="#fff" stroke-width="1.7" fill="none"/></svg>
<span class="t" style="left:317.50px;top:351px;font-size:18.2px;color:#111111;transform:scaleX(0.9400);-webkit-text-stroke:.35px #111;">0</span>
<span class="t" style="left:343.62px;top:351px;font-size:18.2px;color:#111111;transform:scaleX(0.9400);-webkit-text-stroke:.35px #111;">1</span>
<span class="t" style="left:369.74px;top:351px;font-size:18.2px;color:#111111;transform:scaleX(0.9400);-webkit-text-stroke:.35px #111;">2</span>
<span class="t" style="left:395.86px;top:351px;font-size:18.2px;color:#111111;transform:scaleX(0.9400);-webkit-text-stroke:.35px #111;">3</span>
<span class="t" style="left:421.98px;top:351px;font-size:18.2px;color:#111111;transform:scaleX(0.9400);-webkit-text-stroke:.35px #111;">4</span>
<span class="t" style="left:448.10px;top:351px;font-size:18.2px;color:#111111;transform:scaleX(0.9400);-webkit-text-stroke:.35px #111;">5</span>
<span class="t" style="left:474.22px;top:351px;font-size:18.2px;color:#111111;transform:scaleX(0.9400);-webkit-text-stroke:.35px #111;">6</span>
<span class="t" style="left:500.34px;top:351px;font-size:18.2px;color:#111111;transform:scaleX(0.9400);-webkit-text-stroke:.35px #111;">7</span>
<span class="t" style="left:526.46px;top:351px;font-size:18.2px;color:#111111;transform:scaleX(0.9400);-webkit-text-stroke:.35px #111;">8</span>
<span class="t" style="left:552.58px;top:351px;font-size:18.2px;color:#111111;transform:scaleX(0.9400);-webkit-text-stroke:.35px #111;">9</span>
<span class="t" style="left:581.08px;top:351px;font-size:18.2px;color:#111111;transform:scaleX(0.9400);-webkit-text-stroke:.35px #111;">:</span>
<span class="t" style="left:607.20px;top:351px;font-size:18.2px;color:#111111;transform:scaleX(0.9400);-webkit-text-stroke:.35px #111;">;</span>
<span class="t" style="left:630.70px;top:351px;font-size:18.2px;color:#111111;transform:scaleX(0.9400);-webkit-text-stroke:.35px #111;">&lt;</span>
<span class="t" style="left:656.82px;top:351px;font-size:18.2px;color:#111111;transform:scaleX(0.9400);-webkit-text-stroke:.35px #111;">=</span>
<span class="t" style="left:682.94px;top:351px;font-size:18.2px;color:#111111;transform:scaleX(0.9400);-webkit-text-stroke:.35px #111;">&gt;</span>
<span class="t" style="left:709.30px;top:351px;font-size:18.2px;color:#111111;transform:scaleX(0.9400);-webkit-text-stroke:.35px #111;">?</span>
<span class="t" style="left:313.58px;top:381px;font-size:18.2px;color:#111111;transform:scaleX(0.9400);-webkit-text-stroke:.35px #111;">@</span>
<span class="t" style="left:342.67px;top:380px;font-size:18.2px;color:#111111;transform:scaleX(0.9400);-webkit-text-stroke:.35px #111;">A</span>
<span class="t" style="left:368.79px;top:380px;font-size:18.2px;color:#111111;transform:scaleX(0.9400);-webkit-text-stroke:.35px #111;">B</span>
<span class="t" style="left:394.44px;top:380px;font-size:18.2px;color:#111111;transform:scaleX(0.9400);-webkit-text-stroke:.35px #111;">C</span>
<span class="t" style="left:420.56px;top:380px;font-size:18.2px;color:#111111;transform:scaleX(0.9400);-webkit-text-stroke:.35px #111;">D</span>
<span class="t" style="left:447.15px;top:380px;font-size:18.2px;color:#111111;transform:scaleX(0.9400);-webkit-text-stroke:.35px #111;">E</span>
<span class="t" style="left:473.75px;top:380px;font-size:18.2px;color:#111111;transform:scaleX(0.9400);-webkit-text-stroke:.35px #111;">F</span>
<span class="t" style="left:498.45px;top:380px;font-size:18.2px;color:#111111;transform:scaleX(0.9400);-webkit-text-stroke:.35px #111;">G</span>
<span class="t" style="left:525.04px;top:380px;font-size:18.2px;color:#111111;transform:scaleX(0.9400);-webkit-text-stroke:.35px #111;">H</span>
<span class="t" style="left:554.96px;top:380px;font-size:18.2px;color:#111111;transform:scaleX(0.9400);-webkit-text-stroke:.35px #111;">I</span>
<span class="t" style="left:579.18px;top:380px;font-size:18.2px;color:#111111;transform:scaleX(0.9400);-webkit-text-stroke:.35px #111;">J</span>
<span class="t" style="left:603.87px;top:380px;font-size:18.2px;color:#111111;transform:scaleX(0.9400);-webkit-text-stroke:.35px #111;">K</span>
<span class="t" style="left:630.94px;top:380px;font-size:18.2px;color:#111111;transform:scaleX(0.9400);-webkit-text-stroke:.35px #111;">L</span>
<span class="t" style="left:654.69px;top:380px;font-size:18.2px;color:#111111;transform:scaleX(0.9400);-webkit-text-stroke:.35px #111;">M</span>
<span class="t" style="left:681.76px;top:380px;font-size:18.2px;color:#111111;transform:scaleX(0.9400);-webkit-text-stroke:.35px #111;">N</span>
<span class="t" style="left:707.41px;top:380px;font-size:18.2px;color:#111111;transform:scaleX(0.9400);-webkit-text-stroke:.35px #111;">O</span>
<span class="t" style="left:316.55px;top:408px;font-size:18.2px;color:#111111;transform:scaleX(0.9400);-webkit-text-stroke:.35px #111;">P</span>
<span class="t" style="left:341.73px;top:408px;font-size:18.2px;color:#111111;transform:scaleX(0.9400);-webkit-text-stroke:.35px #111;">Q</span>
<span class="t" style="left:368.32px;top:408px;font-size:18.2px;color:#111111;transform:scaleX(0.9400);-webkit-text-stroke:.35px #111;">R</span>
<span class="t" style="left:394.91px;top:408px;font-size:18.2px;color:#111111;transform:scaleX(0.9400);-webkit-text-stroke:.35px #111;">S</span>
<span class="t" style="left:421.51px;top:408px;font-size:18.2px;color:#111111;transform:scaleX(0.9400);-webkit-text-stroke:.35px #111;">T</span>
<span class="t" style="left:446.68px;top:408px;font-size:18.2px;color:#111111;transform:scaleX(0.9400);-webkit-text-stroke:.35px #111;">U</span>
<span class="t" style="left:473.27px;top:408px;font-size:18.2px;color:#111111;transform:scaleX(0.9400);-webkit-text-stroke:.35px #111;">V</span>
<span class="t" style="left:497.03px;top:408px;font-size:18.2px;color:#111111;transform:scaleX(0.9400);-webkit-text-stroke:.35px #111;">W</span>
<span class="t" style="left:525.51px;top:408px;font-size:18.2px;color:#111111;transform:scaleX(0.9400);-webkit-text-stroke:.35px #111;">X</span>
<span class="t" style="left:551.63px;top:408px;font-size:18.2px;color:#111111;transform:scaleX(0.9400);-webkit-text-stroke:.35px #111;">Y</span>
<span class="t" style="left:578.23px;top:408px;font-size:18.2px;color:#111111;transform:scaleX(0.9400);-webkit-text-stroke:.35px #111;">Z</span>
<span class="t" style="left:606.97px;top:408px;font-size:20px;color:#111111;transform:scaleX(0.9400);-webkit-text-stroke:.35px #111;">[</span>
<span class="t" style="left:633.02px;top:408px;font-size:20.5px;color:#111111;transform:scaleX(0.9400);-webkit-text-stroke:.35px #111;">\</span>
<span class="t" style="left:659.21px;top:408px;font-size:20px;color:#111111;transform:scaleX(0.9400);-webkit-text-stroke:.35px #111;">]</span>
<span class="t" style="left:683.93px;top:408px;font-size:18.2px;color:#111111;transform:scaleX(0.9400);-webkit-text-stroke:.35px #111;">^</span>
<span class="t" style="left:709.30px;top:408px;font-size:18.2px;color:#111111;transform:scaleX(0.9400);-webkit-text-stroke:.35px #111;">_</span>
<div style="left:309.00px;top:315.80px;width:1.00px;height:114.40px;background:#8c8c8c;"></div>
<div style="left:335.00px;top:315.80px;width:1.00px;height:114.40px;background:#6a6a6a;"></div>
<div style="left:361.00px;top:315.80px;width:1.00px;height:114.40px;background:#111111;"></div>
<div style="left:387.00px;top:315.80px;width:1.00px;height:114.40px;background:#111111;"></div>
<div style="left:413.00px;top:315.80px;width:1.00px;height:114.40px;background:#111111;"></div>
<div style="left:439.00px;top:315.80px;width:1.00px;height:114.40px;background:#111111;"></div>
<div style="left:465.00px;top:315.80px;width:1.00px;height:114.40px;background:#111111;"></div>
<div style="left:492.00px;top:315.80px;width:1.00px;height:114.40px;background:#111111;"></div>
<div style="left:518.00px;top:315.80px;width:1.00px;height:114.40px;background:#111111;"></div>
<div style="left:544.00px;top:315.80px;width:1.00px;height:114.40px;background:#111111;"></div>
<div style="left:570.00px;top:315.80px;width:1.00px;height:114.40px;background:#111111;"></div>
<div style="left:596.00px;top:315.80px;width:1.00px;height:114.40px;background:#111111;"></div>
<div style="left:622.00px;top:315.80px;width:1.00px;height:114.40px;background:#111111;"></div>
<div style="left:648.00px;top:315.80px;width:1.00px;height:114.40px;background:#111111;"></div>
<div style="left:674.00px;top:315.80px;width:1.00px;height:114.40px;background:#6a6a6a;"></div>
<div style="left:700.00px;top:315.80px;width:1.00px;height:114.40px;background:#111111;"></div>
<div style="left:727.00px;top:315.80px;width:1.00px;height:114.40px;background:#8c8c8c;"></div>
<div style="left:308.40px;top:315.00px;width:418.72px;height:1.00px;background:#9a9a9a;"></div>
<div style="left:308.40px;top:344.00px;width:418.72px;height:1.00px;background:#4a4a4a;"></div>
<div style="left:308.40px;top:373.00px;width:418.72px;height:1.00px;background:#4a4a4a;"></div>
<div style="left:308.40px;top:401.00px;width:418.72px;height:1.00px;background:#4a4a4a;"></div>
<div style="left:308.40px;top:430.00px;width:418.72px;height:1.00px;background:#4a4a4a;"></div>
<div style="left:308.40px;top:431.00px;width:418.72px;height:1.00px;background:#b5b5b5;"></div>
<div style="left:701.80px;top:317.00px;width:24.92px;height:0.00px;border-top:1px dotted #111;"></div>
<div style="left:701.80px;top:343.20px;width:24.92px;height:0.00px;border-top:1px dotted #111;"></div>
<div style="left:729.00px;top:316.00px;width:13.60px;height:114.60px;background:#f0f0f0;"></div>
<div style="left:729.00px;top:330.80px;width:13.60px;height:13.80px;background:#cdcdcd;"></div>
<svg class="i" style="left:731.80px;top:320.60px;" width="8" height="6" viewBox="0 0 8 6"><path d="M.8 4.8 L4 1.4 L7.2 4.8" fill="none" stroke="#444" stroke-width="1.1"/></svg>
<svg class="i" style="left:731.80px;top:421.00px;" width="8" height="6" viewBox="0 0 8 6"><path d="M.8 1.2 L4 4.6 L7.2 1.2" fill="none" stroke="#444" stroke-width="1.1"/></svg>
<span class="t" style="left:307.60px;top:443px;font-size:10px;color:#1a1a1a;transform:scaleX(0.9053);"><u>R</u>ecently used symbols:</span>
<div style="left:308.40px;top:455.60px;width:421.60px;height:29.80px;background:#ffffff;"></div>
<div style="left:318.95px;top:463.70px;width:6.60px;height:1.60px;background:#111;"></div>
<span class="t" style="left:343.89px;top:463px;font-size:18.2px;color:#111;transform:scaleX(0.9400);-webkit-text-stroke:.35px #111;">€</span>
<span class="t" style="left:370.19px;top:463px;font-size:18.2px;color:#111;transform:scaleX(0.9400);-webkit-text-stroke:.35px #111;">£</span>
<span class="t" style="left:396.49px;top:463px;font-size:18.2px;color:#111;transform:scaleX(0.9400);-webkit-text-stroke:.35px #111;">¥</span>
<span class="t" style="left:420.45px;top:461px;font-size:20.5px;color:#111;transform:scaleX(0.9400);-webkit-text-stroke:.35px #111;">©</span>
<span class="t" style="left:449.87px;top:462px;font-size:11.5px;color:#111;transform:scaleX(0.9400);-webkit-text-stroke:.35px #111;">®</span>
<span class="t" style="left:473.40px;top:461px;font-size:13.5px;color:#111;font-weight:bold;">™</span>
<span class="t" style="left:501.65px;top:463px;font-size:18.6px;color:#111;transform:scaleX(0.9400);-webkit-text-stroke:.35px #111;">±</span>
<span class="t" style="left:527.85px;top:462px;font-size:19px;color:#111;transform:scaleX(0.9400);-webkit-text-stroke:.35px #111;">≠</span>
<span class="t" style="left:553.99px;top:462px;font-size:19.6px;color:#111;transform:scaleX(0.9400);-webkit-text-stroke:.35px #111;">≤</span>
<span class="t" style="left:580.29px;top:462px;font-size:19.6px;color:#111;transform:scaleX(0.9400);-webkit-text-stroke:.35px #111;">≥</span>
<span class="t" style="left:606.75px;top:462px;font-size:19px;color:#111;transform:scaleX(0.9400);-webkit-text-stroke:.35px #111;">÷</span>
<span class="t" style="left:632.74px;top:462px;font-size:19px;color:#111;transform:scaleX(0.9400);-webkit-text-stroke:.35px #111;">×</span>
<span class="t" style="left:655.34px;top:461px;font-size:20px;color:#111;transform:scaleX(1.2500);-webkit-text-stroke:.35px #111;">∞</span>
<span class="t" style="left:685.40px;top:462px;font-size:19px;color:#111;transform:scaleX(0.9400);-webkit-text-stroke:.35px #111;">µ</span>
<span class="t" style="left:711.69px;top:462px;font-size:19px;color:#111;transform:scaleX(0.9400);-webkit-text-stroke:.35px #111;">α</span>
<div style="left:309.00px;top:455.60px;width:1.00px;height:29.80px;background:#8c8c8c;"></div>
<div style="left:335.00px;top:455.60px;width:1.00px;height:29.80px;background:#6a6a6a;"></div>
<div style="left:361.00px;top:455.60px;width:1.00px;height:29.80px;background:#111111;"></div>
<div style="left:388.00px;top:455.60px;width:1.00px;height:29.80px;background:#111111;"></div>
<div style="left:414.00px;top:455.60px;width:1.00px;height:29.80px;background:#111111;"></div>
<div style="left:440.00px;top:455.60px;width:1.00px;height:29.80px;background:#111111;"></div>
<div style="left:466.00px;top:455.60px;width:1.00px;height:29.80px;background:#6a6a6a;"></div>
<div style="left:493.00px;top:455.60px;width:1.00px;height:29.80px;background:#111111;"></div>
<div style="left:519.00px;top:455.60px;width:1.00px;height:29.80px;background:#111111;"></div>
<div style="left:545.00px;top:455.60px;width:1.00px;height:29.80px;background:#111111;"></div>
<div style="left:572.00px;top:455.60px;width:1.00px;height:29.80px;background:#111111;"></div>
<div style="left:598.00px;top:455.60px;width:1.00px;height:29.80px;background:#111111;"></div>
<div style="left:624.00px;top:455.60px;width:1.00px;height:29.80px;background:#111111;"></div>
<div style="left:651.00px;top:455.60px;width:1.00px;height:29.80px;background:#111111;"></div>
<div style="left:677.00px;top:455.60px;width:1.00px;height:29.80px;background:#111111;"></div>
<div style="left:703.00px;top:455.60px;width:1.00px;height:29.80px;background:#111111;"></div>
<div style="left:730.00px;top:455.60px;width:1.00px;height:29.80px;background:#8c8c8c;"></div>
<div style="left:308.40px;top:455.00px;width:421.60px;height:1.00px;background:#a6a6a6;"></div>
<div style="left:308.40px;top:485.00px;width:422.00px;height:1.00px;background:#8c8c8c;"></div>
<span class="t" style="left:308.00px;top:496px;font-size:10px;color:#1a1a1a;transform:scaleX(0.9128);">Unicode name:</span>
<span class="t" style="left:308.00px;top:513px;font-size:10px;color:#1a1a1a;transform:scaleX(0.8842);">Solidus</span>
<span class="t" style="left:504.20px;top:506px;font-size:10px;color:#1a1a1a;transform:scaleX(0.9136);"><u>C</u>haracter code:</span>
<div style="left:573.20px;top:500.40px;width:44.60px;height:18.40px;background:#ffffff;border:1px solid #b3b3b3;box-sizing:border-box;"></div>
<span class="t" style="left:575.20px;top:506px;font-size:10px;color:#1a1a1a;transform:scaleX(0.8599);">002F</span>
<span class="t" style="left:627.00px;top:506px;font-size:10px;color:#1a1a1a;transform:scaleX(0.9834);">fro<u>m</u>:</span>
<div style="left:653.00px;top:500.00px;width:91.40px;height:19.60px;background:#ffffff;border:1px solid #b3b3b3;box-sizing:border-box;"></div>
<div style="left:729.80px;top:500.00px;width:14.60px;height:19.60px;background:#e3e3e3;border:1px solid #adadad;box-sizing:border-box;"></div>
<svg class="i" style="left:733.10px;top:507.20px;" width="8" height="6" viewBox="0 0 8 6"><path d="M1.0 1.5 L4 4.5 L7.0 1.5" fill="none" stroke="#444" stroke-width="1.0"/></svg>
<span class="t" style="left:656.80px;top:506px;font-size:10px;color:#1a1a1a;transform:scaleX(0.9092);">Unicode (hex)</span>
<div style="left:585.40px;top:542.40px;width:78.80px;height:20.20px;background:#e1e1e1;border:2px solid #0a78d6;box-sizing:border-box;"></div>
<span class="t" style="left:613.00px;top:549px;font-size:10px;color:#1a1a1a;transform:scaleX(0.9196);"><u>I</u>nsert</span>
<div style="left:675.00px;top:542.40px;width:79.40px;height:20.20px;background:#e1e1e1;border:1px solid #bdbdbd;box-sizing:border-box;"></div>
<span class="t" style="left:701.80px;top:549px;font-size:10px;color:#1a1a1a;transform:scaleX(0.8224);">Cancel</span>
<svg class="i" style="left:751.20px;top:559.80px;" width="10" height="10" viewBox="0 0 10 10"><path d="M9.6 1.4 L1.4 9.6 H9.6Z" fill="#fafafa"/><path d="M9.6 1.6 L1.6 9.6 M9.6 5.4 L5.4 9.6" stroke="#8f8f8f" stroke-width="1.1" fill="none"/></svg>
<svg class="i" style="left:28.40px;top:63.20px;" width="49.6" height="35.6" viewBox="0 0 49.6 35.6"><rect x="1.35" y="1.35" width="46.90" height="32.90" fill="none" stroke="#ff0000" stroke-width="2.7"/></svg>
<svg class="i" style="left:1119.80px;top:114.20px;" width="66.4" height="29.0" viewBox="0 0 66.4 29.0"><rect x="1.3" y="1.3" width="63.80" height="26.40" fill="none" stroke="#ff0000" stroke-width="2.6"/></svg>
<svg class="i" style="left:700.40px;top:312.60px;" width="27.6" height="34.8" viewBox="0 0 27.6 34.8"><rect x="1.4" y="1.4" width="24.80" height="32.00" fill="none" stroke="#ff0000" stroke-width="2.8"/></svg>
<svg class="i" style="left:579.60px;top:536.20px;" width="89.8" height="28.8" viewBox="0 0 89.8 28.8"><rect x="1.3" y="1.3" width="87.20" height="26.20" fill="none" stroke="#ff0000" stroke-width="2.6"/></svg>
<svg class="i" style="left:0;top:0" width="1200" height="675" viewBox="0 0 1200 675"><path transform="translate(74.65,162.80) scale(0.04969,-0.04878)" fill="#fb0d1b" fill-rule="evenodd" d="M806 0H525V1059Q371 915 162 846V1101Q272 1137 401 1237.5Q530 1338 578 1472H806Z"/></svg>
<svg class="i" style="left:0;top:0" width="1200" height="675" viewBox="0 0 1200 675"><path transform="translate(1058.18,163.70) scale(0.04934,-0.04891)" fill="#fb0d1b" fill-rule="evenodd" d="M1036 261V0H51Q67 148 147 280.5Q227 413 463 632Q653 809 696 872Q754 959 754 1044Q754 1138 703.5 1188.5Q653 1239 564 1239Q476 1239 424 1186Q372 1133 364 1010L84 1038Q109 1270 241 1371Q373 1472 571 1472Q788 1472 912 1355Q1036 1238 1036 1064Q1036 965 1000.5 875.5Q965 786 888 688Q837 623 704 501Q571 379 535.5 339Q500 299 478 261Z"/></svg>
<svg class="i" style="left:0;top:0" width="1200" height="675" viewBox="0 0 1200 675"><path transform="translate(627.03,371.96) scale(0.04887,-0.04836)" fill="#fb0d1b" fill-rule="evenodd" d="M75 378L347 411Q360 307 417 252Q474 197 555 197Q642 197 701.5 263Q761 329 761 441Q761 547 704 609Q647 671 565 671Q511 671 436 650L467 879Q581 876 641 928.5Q701 981 701 1068Q701 1142 657 1186Q613 1230 540 1230Q468 1230 417 1180Q366 1130 355 1034L96 1078Q123 1211 177.5 1290.5Q232 1370 329.5 1415.5Q427 1461 548 1461Q755 1461 880 1329Q983 1221 983 1085Q983 892 772 777Q898 750 973.5 656Q1049 562 1049 429Q1049 236 908 100Q767 -36 557 -36Q358 -36 227 78.5Q96 193 75 378Z"/></svg>
<svg class="i" style="left:0;top:0" width="1200" height="675" viewBox="0 0 1200 675"><path transform="translate(516.14,584.30) scale(0.04896,-0.04864)" fill="#fb0d1b" fill-rule="evenodd" d="M638 0V295H38V541L674 1472H910V542H1092V295H910V0ZM638 542V1043L301 542Z"/></svg>
</div></body></html>
